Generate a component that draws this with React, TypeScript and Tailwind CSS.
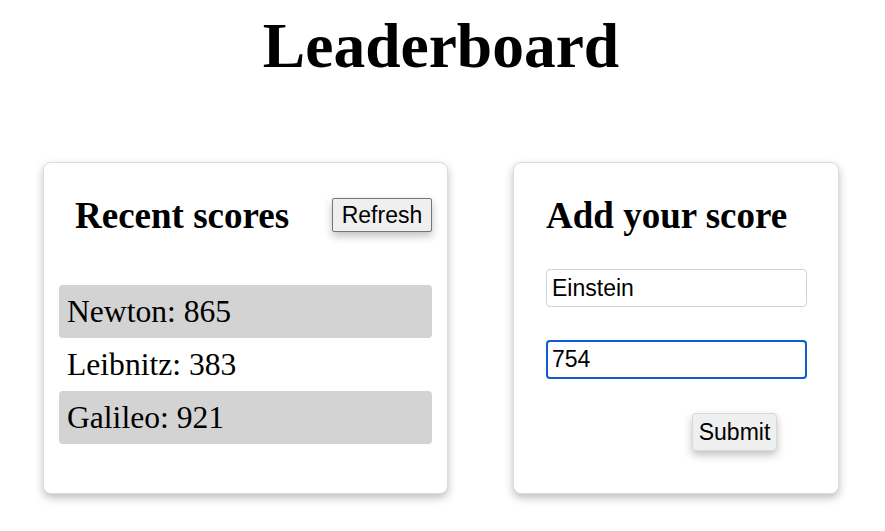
import React from "react";

const serif = { fontFamily: '"Liberation Serif", "Times New Roman", serif' };

export default function App() {
  return (
    <div className="min-h-[531px] w-[885px] bg-white text-black" style={serif}>
      <h1 className="pr-[3px] pt-[9px] text-center text-[63.5px] font-bold leading-[74px] [font-family:'Liberation_Serif',serif]">
        Leaderboard
      </h1>
      <div className="mt-[79px] flex gap-[65px] pl-[43px]">
        <div className="flex h-[332px] w-[405px] flex-col rounded-[8px] border border-[#dcdcdc] bg-white px-[15px] pt-[32px] shadow-[0_4px_8px_rgba(0,0,0,0.25)]">
          <div className="flex h-[42px] items-center justify-between">
            <h2 className="pl-4 text-[37px] font-bold leading-[42px] [font-family:'Liberation_Serif',serif]">
              Recent scores
            </h2>
            <button className="mt-[-2px] h-[34px] w-[100px] rounded-[2px] border border-[#767676] bg-[#efefef] text-[23px] leading-[26px] text-black shadow-[0_4px_8px_rgba(0,0,0,0.25)] [font-family:'Liberation_Sans',Arial,sans-serif]">
              Refresh
            </button>
          </div>
          <ul className="mt-[48px] flex flex-col">
            <li className="rounded-[4px] bg-[#d3d3d3] px-2 text-[31.6px] leading-[53px]">Newton: 865</li>
            <li className="rounded-[4px] px-2 text-[31.6px] leading-[53px]">Leibnitz: 383</li>
            <li className="rounded-[4px] bg-[#d3d3d3] px-2 text-[31.6px] leading-[53px]">Galileo: 921</li>
          </ul>
        </div>
        <div className="flex h-[332px] w-[326px] flex-col rounded-[8px] border border-[#dcdcdc] bg-white pl-[32px] pr-[31px] pt-[32px] shadow-[0_4px_8px_rgba(0,0,0,0.25)]">
          <h2 className="text-[37px] font-bold leading-[42px] [font-family:'Liberation_Serif',serif]">
            Add your score
          </h2>
          <input
            readOnly
            value="Einstein"
            className="mt-[32px] h-[38px] w-[261px] rounded-[4px] border border-[#d0d0d0] bg-white px-[5px] text-[23px] text-black outline-none [font-family:'Liberation_Sans',Arial,sans-serif]"
          />
          <input
            readOnly
            value="754"
            className="mt-[33px] h-[39px] w-[261px] rounded-[4px] border-2 border-[#0b5ccc] bg-white px-[4px] text-[23px] text-black outline-none [font-family:'Liberation_Sans',Arial,sans-serif]"
          />
          <div className="mt-[34px] flex justify-end pr-[30px]">
            <button className="h-[38px] w-[85px] rounded-[4px] border border-[#d8d8d8] bg-[#efefef] text-[23px] leading-[26px] text-black shadow-[0_4px_8px_rgba(0,0,0,0.25)] [font-family:'Liberation_Sans',Arial,sans-serif]">
              Submit
            </button>
          </div>
        </div>
      </div>
    </div>
  );
}
